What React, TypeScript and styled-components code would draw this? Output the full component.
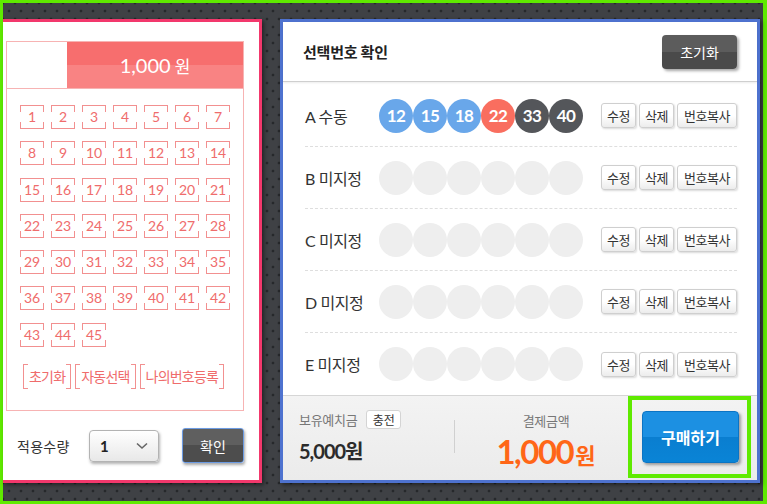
import React from 'react';
import styled, { createGlobalStyle } from 'styled-components';

const GlobalStyle = createGlobalStyle`
  html, body {
    margin: 0;
    padding: 0;
    background: #3f4145;
  }
  body {
    font-family: "Lato", "Noto Sans CJK KR", sans-serif;
  }
  * { box-sizing: border-box; }
`;

const pink = '#f2386c';
const cellLine = '#f29090';
const cellText = '#ef6c6c';

const Frame = styled.div`
  width: 767px;
  height: 504px;
  border: 3px solid #5fea00;
  border-right-width: 4px;
  background-color: #3f4145;
  background-image:
    radial-gradient(circle, #26282b 1.1px, transparent 1.7px),
    radial-gradient(circle, #26282b 1.1px, transparent 1.7px);
  background-size: 12px 16px, 12px 16px;
  background-position: 0 0, 6px 8px;
  display: flex;
  align-items: flex-start;
  gap: 18px;
  padding-top: 16px;
`;

const LeftPanel = styled.section`
  width: 259px;
  height: 464px;
  background: #fff;
  border: 3px solid ${pink};
  border-left: none;
  box-shadow: 2px 2px 4px rgba(0, 0, 0, 0.45);
  display: flex;
  flex-direction: column;
`;

const NumberBox = styled.div`
  margin: 19px 15px 0 3px;
  border: 1px solid #f7b3b3;
  padding-bottom: 21px;
`;

const BoxHeader = styled.div`
  height: 47px;
  border-bottom: 1px solid #f7b3b3;
  display: flex;
`;

const BlankCell = styled.div`
  width: 60px;
`;

const PriceCell = styled.div`
  flex: 1;
  background: linear-gradient(#f76e6e 50%, #f98383 50%);
  color: #fff;
  display: flex;
  align-items: center;
  justify-content: center;
  gap: 4px;
  font-size: 20px;
  line-height: 1;
`;

const Won = styled.span`
  font-family: "Noto Sans CJK KR", sans-serif;
  font-size: 17px;
`;

const Grid = styled.div`
  display: grid;
  grid-template-columns: repeat(7, 24px);
  column-gap: 7px;
  row-gap: 12.3px;
  padding: 16px 0 0 13px;
`;

const tick = (c: string) => `linear-gradient(${c}, ${c})`;

const NumCell = styled.div`
  width: 24px;
  height: 24px;
  border-top: 1px solid ${cellLine};
  border-bottom: 1px solid ${cellLine};
  background:
    ${tick(cellLine)} left top / 1px 6px no-repeat,
    ${tick(cellLine)} right top / 1px 6px no-repeat,
    ${tick(cellLine)} left bottom / 1px 6px no-repeat,
    ${tick(cellLine)} right bottom / 1px 6px no-repeat;
  color: ${cellText};
  font-size: 14px;
  line-height: 22px;
  text-align: center;
`;

const Actions = styled.div`
  display: flex;
  gap: 4px;
  margin: 17px 0 0 16px;
`;

const BracketButton = styled.div`
  height: 25px;
  padding: 0 5px;
  border-left: 1px solid ${cellLine};
  border-right: 1px solid ${cellLine};
  background:
    ${tick(cellLine)} left top / 4px 1px no-repeat,
    ${tick(cellLine)} right top / 4px 1px no-repeat,
    ${tick(cellLine)} left bottom / 4px 1px no-repeat,
    ${tick(cellLine)} right bottom / 4px 1px no-repeat;
  color: ${cellText};
  font-family: "Noto Sans CJK KR", sans-serif;
  font-size: 14px;
  letter-spacing: -0.8px;
  line-height: 24px;
`;

const QtyRow = styled.div`
  flex: 1;
  display: flex;
  align-items: center;
  padding-left: 14px;
  padding-top: 1px;
`;

const QtyLabel = styled.span`
  font-family: "Noto Sans CJK KR", sans-serif;
  font-size: 14px;
  letter-spacing: 0.3px;
  color: #333;
  width: 72px;
`;

const SelectBox = styled.div`
  width: 70px;
  height: 32px;
  border: 1px solid #b3b3b3;
  border-radius: 4px;
  background: linear-gradient(#ffffff, #e8e8e8);
  box-shadow: 1px 2px 3px rgba(0, 0, 0, 0.3);
  display: flex;
  align-items: center;
  justify-content: space-between;
  padding: 0 10px 0 10px;
  font-weight: 700;
  font-size: 15px;
  color: #222;
`;

const ConfirmButton = styled.div`
  margin-left: 23px;
  width: 62px;
  height: 35px;
  border: 1px solid #6c9be2;
  border-radius: 3px;
  background: linear-gradient(#5f5f5f 50%, #4d4d4d 50%);
  box-shadow: 1px 2px 3px rgba(0, 0, 0, 0.35);
  color: #fff;
  font-family: "Noto Sans CJK KR", sans-serif;
  font-size: 14px;
  display: flex;
  align-items: center;
  justify-content: center;
`;

const RightPanel = styled.section`
  width: 480px;
  height: 464px;
  background: #fff;
  border: 3px solid #4e72cf;
  box-shadow: 2px 2px 4px rgba(0, 0, 0, 0.45);
  display: flex;
  flex-direction: column;
`;

const PanelHeader = styled.header`
  height: 60px;
  border-bottom: 1px solid #cfcfcf;
  box-shadow: 0 1px 2px rgba(0, 0, 0, 0.08);
  display: flex;
  align-items: center;
  justify-content: space-between;
  padding: 0 20px;
`;

const Title = styled.h2`
  margin: 0;
  font-family: "Noto Sans CJK KR", sans-serif;
  font-size: 15px;
  font-weight: 700;
  letter-spacing: -0.2px;
  color: #222;
`;

const DarkButton = styled.div`
  width: 75px;
  height: 34px;
  border-radius: 4px;
  background: linear-gradient(#5c5c5c 50%, #4a4a4a 50%);
  box-shadow: 2px 2px 3px rgba(0, 0, 0, 0.35);
  color: #fff;
  font-family: "Noto Sans CJK KR", sans-serif;
  font-size: 14px;
  display: flex;
  align-items: center;
  justify-content: center;
  margin-top: 1px;
`;

const List = styled.div`
  padding-top: 3px;
`;

const Row = styled.div<{ $last?: boolean }>`
  height: 62px;
  margin: 0 20px 0 22px;
  border-bottom: ${p => (p.$last ? 'none' : '1px dashed #dedede')};
  display: flex;
  align-items: center;
`;

const RowLabel = styled.span`
  width: 74px;
  font-size: 16px;
  letter-spacing: -0.4px;
  color: #333;
  font-family: "Lato", "Noto Sans CJK KR", sans-serif;
`;

const Balls = styled.div`
  display: flex;
`;

const ballColors: Record<string, string> = {
  blue: '#69a7ea',
  red: '#f96e5f',
  dark: '#54565a',
  empty: '#eeeeee',
};

const Ball = styled.div<{ $tone: string }>`
  width: 34px;
  height: 34px;
  border-radius: 50%;
  background: ${p => ballColors[p.$tone]};
  color: #fff;
  font-weight: 700;
  font-size: 17px;
  letter-spacing: -0.5px;
  display: flex;
  align-items: center;
  justify-content: center;
`;

const RowButtons = styled.div`
  margin-left: auto;
  display: flex;
  gap: 3px;
`;

const SmallButton = styled.div<{ $w: number }>`
  width: ${p => p.$w}px;
  height: 25px;
  border: 1px solid #cfcfcf;
  border-radius: 3px;
  background: linear-gradient(#ffffff 50%, #ececec);
  box-shadow: 1px 1px 2px rgba(0, 0, 0, 0.15);
  color: #333;
  font-family: "Noto Sans CJK KR", sans-serif;
  font-size: 13px;
  letter-spacing: -0.5px;
  display: flex;
  align-items: center;
  justify-content: center;
`;

const Footer = styled.footer`
  flex: 1;
  border-top: 1px solid #d6d6d6;
  background: linear-gradient(#f3f3f3, #ebebeb);
  display: flex;
  align-items: flex-start;
`;

const Balance = styled.div`
  width: 171px;
  padding: 14px 0 0 16px;
  display: flex;
  flex-direction: column;
`;

const LabelLine = styled.div`
  display: flex;
  align-items: center;
  gap: 9px;
  height: 19px;
`;

const MutedLabel = styled.span`
  font-family: "Noto Sans CJK KR", sans-serif;
  font-size: 13px;
  letter-spacing: -0.3px;
  color: #777;
`;

const ChargeButton = styled.div`
  width: 35px;
  height: 19px;
  background: #fff;
  border: 1px solid #d4d4d4;
  border-radius: 3px;
  font-family: "Noto Sans CJK KR", sans-serif;
  font-size: 12px;
  color: #333;
  display: flex;
  align-items: center;
  justify-content: center;
`;

const BalanceAmount = styled.div`
  margin-top: 9px;
  font-size: 20px;
  font-weight: 700;
  letter-spacing: -1px;
  line-height: 26px;
  color: #2b2b2b;
`;

const Divider = styled.div`
  width: 1px;
  height: 33px;
  margin-top: 24px;
  background: #d0d0d0;
`;

const PayBlock = styled.div`
  width: 173px;
  padding: 15px 0 0 9px;
  display: flex;
  flex-direction: column;
  align-items: center;
`;

const PayAmount = styled.div`
  margin-top: 3px;
  color: #ff6617;
  font-weight: 700;
  font-size: 33px;
  letter-spacing: -1.5px;
  line-height: 36px;
`;

const PayWon = styled.span`
  font-family: "Noto Sans CJK KR", sans-serif;
  font-size: 22px;
  letter-spacing: 0;
  margin-left: 2px;
`;

const Highlight = styled.div`
  width: 123px;
  height: 82px;
  border: 4px solid #5fea00;
  padding: 11px 8px 0 10px;
`;

const BuyButton = styled.div`
  width: 97px;
  height: 52px;
  border-radius: 4px;
  border: 1px solid #0b74c4;
  background: linear-gradient(#1c90e2 50%, #0a7ed0 50%, #0a84d6);
  box-shadow: 2px 2px 3px rgba(0, 0, 0, 0.35);
  color: #fff;
  font-family: "Noto Sans CJK KR", sans-serif;
  font-size: 16px;
  font-weight: 700;
  display: flex;
  align-items: center;
  justify-content: center;
`;

const rows = [
  { key: 'A', label: 'A 수동', balls: [
    { n: 12, tone: 'blue' }, { n: 15, tone: 'blue' }, { n: 18, tone: 'blue' },
    { n: 22, tone: 'red' }, { n: 33, tone: 'dark' }, { n: 40, tone: 'dark' },
  ] },
  { key: 'B', label: 'B 미지정', balls: [] },
  { key: 'C', label: 'C 미지정', balls: [] },
  { key: 'D', label: 'D 미지정', balls: [] },
  { key: 'E', label: 'E 미지정', balls: [] },
];

const numbers = Array.from({ length: 45 }, (_, i) => i + 1);

function Chevron() {
  return (
    <svg width="12" height="8" viewBox="0 0 12 8">
      <polyline points="1,1.5 6,6 11,1.5" fill="none" stroke="#666" strokeWidth="1.6" />
    </svg>
  );
}

export default function App() {
  return (
    <>
      <GlobalStyle />
      <Frame>
        <LeftPanel>
          <NumberBox>
            <BoxHeader>
              <BlankCell />
              <PriceCell>1,000<Won>원</Won></PriceCell>
            </BoxHeader>
            <Grid>
              {numbers.map(n => <NumCell key={n}>{n}</NumCell>)}
            </Grid>
            <Actions>
              <BracketButton>초기화</BracketButton>
              <BracketButton>자동선택</BracketButton>
              <BracketButton>나의번호등록</BracketButton>
            </Actions>
          </NumberBox>
          <QtyRow>
            <QtyLabel>적용수량</QtyLabel>
            <SelectBox>1<Chevron /></SelectBox>
            <ConfirmButton>확인</ConfirmButton>
          </QtyRow>
        </LeftPanel>

        <RightPanel>
          <PanelHeader>
            <Title>선택번호 확인</Title>
            <DarkButton>초기화</DarkButton>
          </PanelHeader>
          <List>
            {rows.map((r, i) => (
              <Row key={r.key} $last={i === rows.length - 1}>
                <RowLabel>{r.label}</RowLabel>
                <Balls>
                  {(r.balls.length ? r.balls : Array.from({ length: 6 }, () => ({ n: 0, tone: 'empty' })))
                    .map((b, j) => (
                      <Ball key={j} $tone={b.tone}>{b.n ? b.n : ''}</Ball>
                    ))}
                </Balls>
                <RowButtons>
                  <SmallButton $w={35}>수정</SmallButton>
                  <SmallButton $w={35}>삭제</SmallButton>
                  <SmallButton $w={60}>번호복사</SmallButton>
                </RowButtons>
              </Row>
            ))}
          </List>
          <Footer>
            <Balance>
              <LabelLine>
                <MutedLabel>보유예치금</MutedLabel>
                <ChargeButton>충전</ChargeButton>
              </LabelLine>
              <BalanceAmount>5,000원</BalanceAmount>
            </Balance>
            <Divider />
            <PayBlock>
              <MutedLabel>결제금액</MutedLabel>
              <PayAmount>1,000<PayWon>원</PayWon></PayAmount>
            </PayBlock>
            <Highlight>
              <BuyButton>구매하기</BuyButton>
            </Highlight>
          </Footer>
        </RightPanel>
      </Frame>
    </>
  );
}
